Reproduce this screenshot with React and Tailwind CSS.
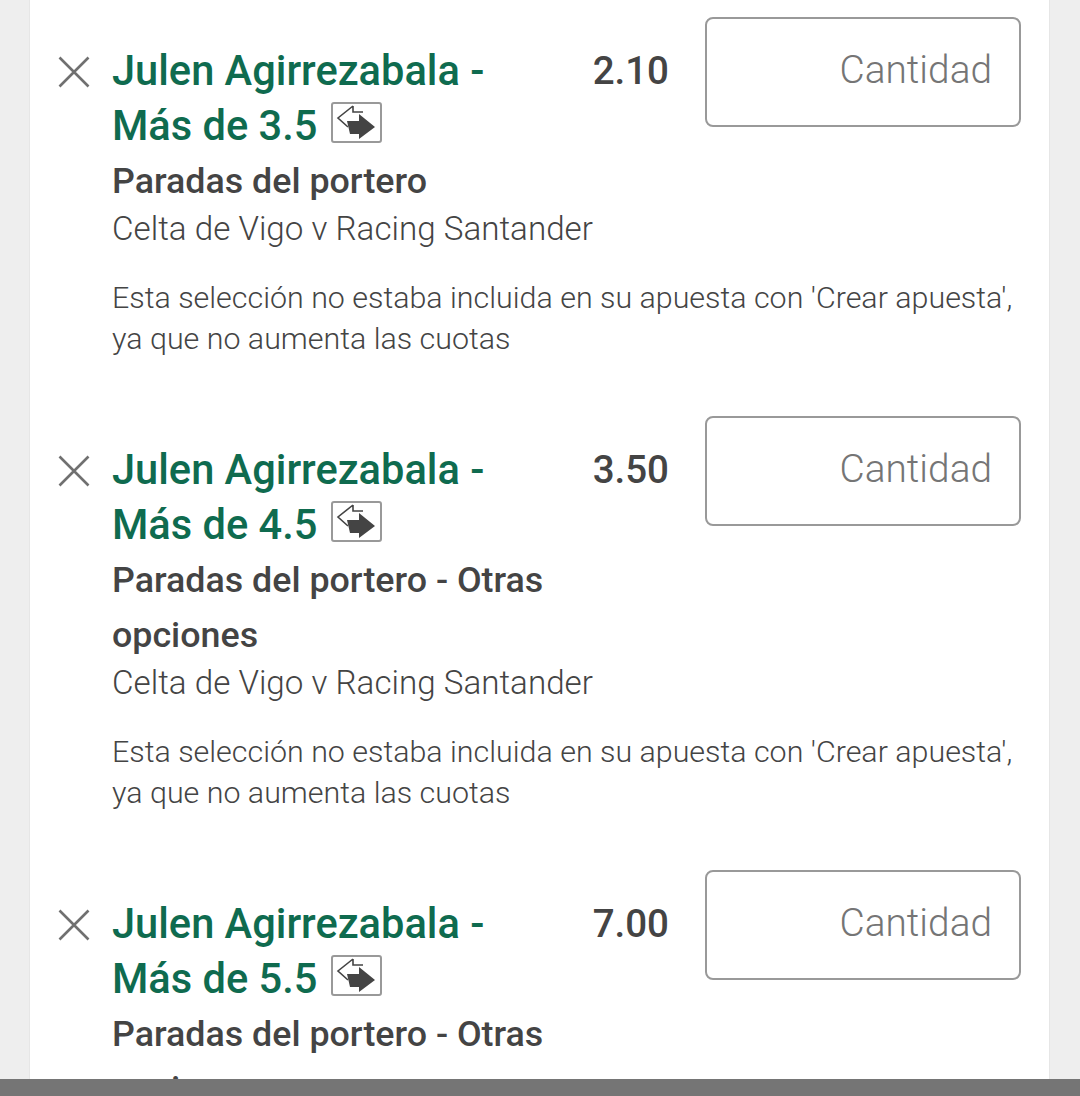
const rows = [
  { title: "Más de 3.5", odds: "2.10", sub: ["Paradas del portero"] },
  { title: "Más de 4.5", odds: "3.50", sub: ["Paradas del portero - Otras", "opciones"] },
  { title: "Más de 5.5", odds: "7.00", sub: ["Paradas del portero - Otras", "opciones"] },
];

function Swap() {
  return (
    <span className="ml-[14px] inline-flex h-[41px] w-[51px] items-center justify-center rounded-[3px] border-2 border-[#999] bg-white align-[-1px]">
      <svg width="47" height="37" viewBox="0 0 47 37" className="shrink-0">
        <path d="M20 2 L5 14 L15 23 M20 2 V8 H30" fill="none" stroke="#444" strokeWidth="1.6" />
        <path d="M14 17 H26 V10 L42 23 L26 35 V30 H17 Z" fill="#444" />
      </svg>
    </span>
  );
}

function Row({ title, odds, sub }) {
  return (
    <div className="flex items-start">
      <svg width="32" height="32" viewBox="0 0 32 32" className="ml-[28px] mt-[56px] shrink-0 text-[#707070]">
        <path d="M1.5 1.5 L30.5 30.5 M30.5 1.5 L1.5 30.5" stroke="currentColor" strokeWidth="2.6" fill="none" />
      </svg>
      <div className="ml-[22px] w-[594px] shrink-0 pt-[44px]">
        <div className="flex items-start justify-between pr-[37px]">
          <div className="text-[41.6px] leading-[54.5px] font-medium text-[#0f6b4f]">
            Julen Agirrezabala -<br />
            {title}
            <Swap />
          </div>
          <div className="text-[38.5px] leading-[54.5px] font-medium text-[#444444]">{odds}</div>
        </div>
        <div className="mt-[1px] text-[35.8px] leading-[55px] font-medium text-[#444444]">
          {sub.map((s) => (
            <div key={s}>{s}</div>
          ))}
        </div>
        <div className="mt-[-1px] text-[33.2px] leading-[42px] font-light text-[#444444] whitespace-nowrap">
          Celta de Vigo v Racing Santander
        </div>
        <div className="mt-[27px] w-[905px] text-[30.4px] leading-[41px] font-light text-[#444444]">
          Esta selección no estaba incluida en su apuesta con 'Crear apuesta', ya que no aumenta las cuotas
        </div>
      </div>
      <div className="ml-[-1px] mt-[17px] flex h-[110px] w-[316px] shrink-0 items-center justify-end rounded-[8px] border-2 border-[#999] pb-[3px] pr-[27px] text-[38.8px] font-light text-[#757575]">
        Cantidad
      </div>
    </div>
  );
}

export default function App() {
  return (
    <div className="flex h-[1096px] w-[1080px] flex-col overflow-hidden bg-[#eeeeee] font-['Roboto',sans-serif]">
      <div className="ml-[29px] mr-[30px] min-h-0 flex-1 overflow-hidden border-x border-[#e6e6e6] bg-white">
        <div className="flex flex-col gap-[40px]">
          {rows.map((r) => (
            <Row key={r.title} {...r} />
          ))}
        </div>
      </div>
      <div className="h-[17px] shrink-0 bg-[#757575]" />
    </div>
  );
}
